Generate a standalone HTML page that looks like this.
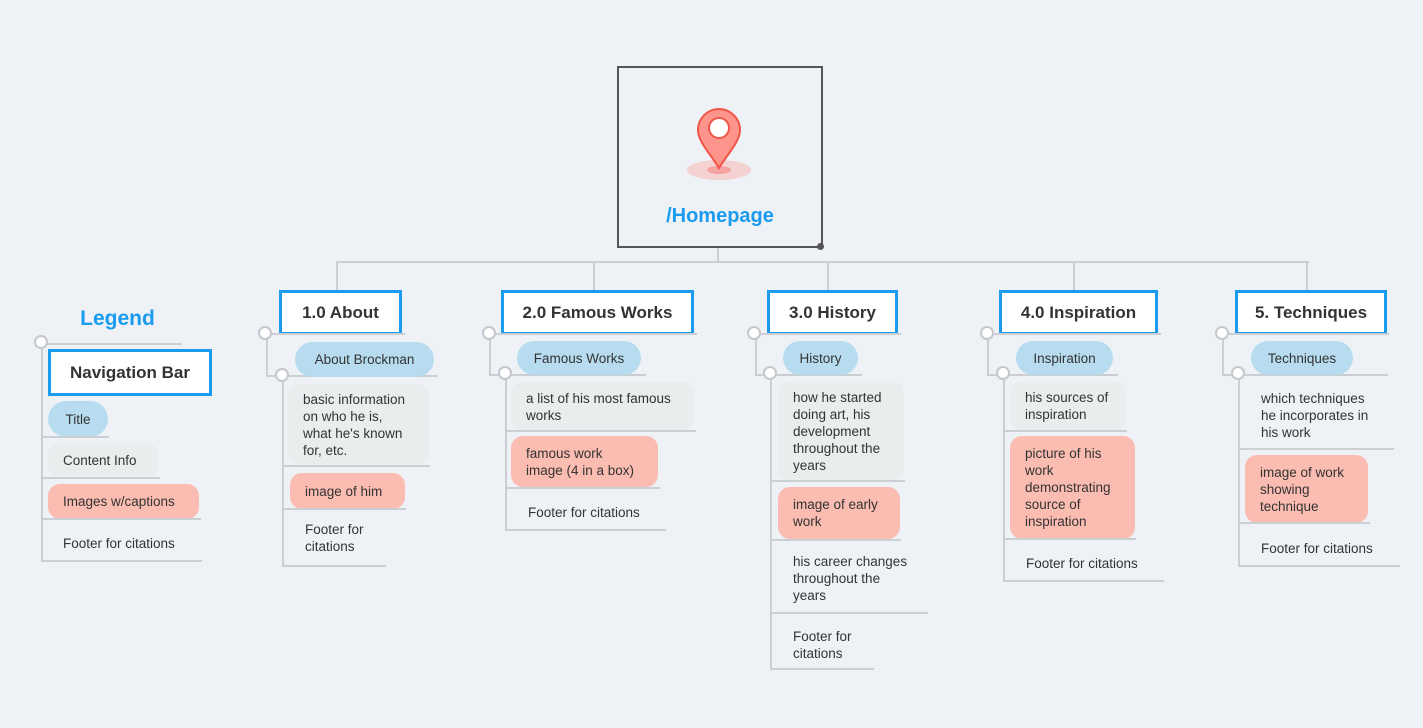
<!DOCTYPE html>
<html><head><meta charset="utf-8"><style>
body{margin:0;width:1423px;height:728px;background:#eef2f6;position:relative;overflow:hidden;font-family:"Liberation Sans",sans-serif;color:#333}
div{position:absolute;box-sizing:border-box}
.h{height:2px;background:#cbcfd3}
.v{width:2px;background:#cbcfd3}
.c{width:14px;height:14px;border-radius:50%;background:#fff;border:2px solid #c4c8cc}
.hd{background:#fff;border:3px solid #1a9bf0;font-weight:bold;font-size:17px;color:#333;text-align:center;display:flex;align-items:center;justify-content:center}
.n{font-size:13.5px;line-height:17px;padding-left:15px;display:flex;align-items:center;border-radius:12px}
.b{background:#b8dcef;border-radius:18px;justify-content:center;padding:0}
.g{background:#e8edee}
.p{background:#fbbcb1}
</style></head><body>
<!-- root -->
<div style="left:617px;top:66px;width:206px;height:182px;border:2px solid #555"></div>
<div style="left:817px;top:243px;width:7px;height:7px;border-radius:50%;background:#555"></div>
<svg style="position:absolute;left:686px;top:106px" width="68" height="78" viewBox="0 0 68 78">
<ellipse cx="33" cy="64" rx="32" ry="10" fill="#f6c9c9" opacity=".8"/>
<ellipse cx="33" cy="64" rx="12" ry="4" fill="#f4a3a0"/>
<path d="M33 62 C26 50 12 36 12 24 A21 21 0 0 1 54 24 C54 36 40 50 33 62Z" fill="#fd958c" stroke="#f05548" stroke-width="2"/>
<circle cx="33" cy="22" r="10" fill="#fff" stroke="#f05548" stroke-width="2"/>
</svg>
<div style="left:617px;top:205px;width:206px;text-align:center;font-size:20px;font-weight:bold;color:#1a9bf0">/Homepage</div>
<div class="v" style="left:717px;top:248px;height:15px"></div>
<div class="h" style="left:336px;top:261px;width:973px"></div>
<div class="v" style="left:336px;top:261px;height:30px"></div>
<div class="v" style="left:593px;top:261px;height:30px"></div>
<div class="v" style="left:827px;top:261px;height:30px"></div>
<div class="v" style="left:1073px;top:261px;height:30px"></div>
<div class="v" style="left:1306px;top:261px;height:30px"></div>

<!-- legend -->
<div style="left:60px;top:307px;width:115px;text-align:center;font-size:21px;font-weight:bold;color:#1a9bf0">Legend</div>
<div class="h" style="left:42px;top:343px;width:140px"></div>
<div class="v" style="left:41px;top:342px;height:220px"></div>
<div class="c" style="left:34px;top:335px"></div>
<div class="hd" style="left:48px;top:349px;width:164px;height:47px">Navigation Bar</div>
<div class="n b" style="left:48px;top:401px;width:60px;height:36px">Title</div>
<div class="h" style="left:42px;top:436px;width:67px"></div>
<div class="n g" style="left:48px;top:443px;width:110px;height:35px">Content Info</div>
<div class="h" style="left:42px;top:477px;width:118px"></div>
<div class="n p" style="left:48px;top:484px;width:151px;height:35px">Images w/captions</div>
<div class="h" style="left:42px;top:518px;width:159px"></div>
<div class="n" style="left:48px;top:526px;width:160px;height:35px">Footer for citations</div>
<div class="h" style="left:42px;top:560px;width:160px"></div>

<!-- About -->
<div class="hd" style="left:279px;top:290px;width:123px;height:45px">1.0 About</div>
<div class="h" style="left:267px;top:333px;width:138px"></div>
<div class="v" style="left:266px;top:333px;height:44px"></div>
<div class="h" style="left:266px;top:375px;width:172px"></div>
<div class="v" style="left:282px;top:375px;height:192px"></div>
<div class="c" style="left:258px;top:326px"></div>
<div class="c" style="left:275px;top:368px"></div>
<div class="n b" style="left:295px;top:342px;width:139px;height:35px">About Brockman</div>
<div class="n g" style="left:288px;top:384px;width:141px;height:82px">basic information<br>on who he is,<br>what he's known<br>for, etc.</div>
<div class="h" style="left:283px;top:465px;width:147px"></div>
<div class="n p" style="left:290px;top:473px;width:115px;height:36px">image of him</div>
<div class="h" style="left:283px;top:508px;width:123px"></div>
<div class="n" style="left:290px;top:518px;width:100px;height:40px">Footer for<br>citations</div>
<div class="h" style="left:283px;top:565px;width:103px"></div>

<!-- Famous -->
<div class="hd" style="left:501px;top:290px;width:193px;height:45px">2.0 Famous Works</div>
<div class="h" style="left:490px;top:333px;width:207px"></div>
<div class="v" style="left:489px;top:333px;height:42px"></div>
<div class="h" style="left:489px;top:374px;width:157px"></div>
<div class="v" style="left:505px;top:374px;height:157px"></div>
<div class="c" style="left:482px;top:326px"></div>
<div class="c" style="left:498px;top:366px"></div>
<div class="n b" style="left:517px;top:341px;width:124px;height:34px">Famous Works</div>
<div class="n g" style="left:511px;top:382px;width:183px;height:49px">a list of his most famous<br>works</div>
<div class="h" style="left:506px;top:430px;width:190px"></div>
<div class="n p" style="left:511px;top:436px;width:147px;height:51px">famous work<br>image (4 in a box)</div>
<div class="h" style="left:506px;top:487px;width:154px"></div>
<div class="n" style="left:513px;top:495px;width:160px;height:34px">Footer for citations</div>
<div class="h" style="left:506px;top:529px;width:160px"></div>

<!-- History -->
<div class="hd" style="left:767px;top:290px;width:131px;height:45px">3.0 History</div>
<div class="h" style="left:756px;top:333px;width:145px"></div>
<div class="v" style="left:755px;top:333px;height:42px"></div>
<div class="h" style="left:755px;top:374px;width:107px"></div>
<div class="v" style="left:770px;top:374px;height:296px"></div>
<div class="c" style="left:747px;top:326px"></div>
<div class="c" style="left:763px;top:366px"></div>
<div class="n b" style="left:783px;top:341px;width:75px;height:34px">History</div>
<div class="n g" style="left:778px;top:381px;width:126px;height:100px">how he started<br>doing art, his<br>development<br>throughout the<br>years</div>
<div class="h" style="left:771px;top:480px;width:134px"></div>
<div class="n p" style="left:778px;top:487px;width:122px;height:52px">image of early<br>work</div>
<div class="h" style="left:771px;top:539px;width:130px"></div>
<div class="n" style="left:778px;top:552px;width:150px;height:52px">his career changes<br>throughout the<br>years</div>
<div class="h" style="left:771px;top:612px;width:157px"></div>
<div class="n" style="left:778px;top:627px;width:100px;height:35px">Footer for<br>citations</div>
<div class="h" style="left:771px;top:668px;width:103px"></div>

<!-- Inspiration -->
<div class="hd" style="left:999px;top:290px;width:159px;height:45px">4.0 Inspiration</div>
<div class="h" style="left:988px;top:333px;width:173px"></div>
<div class="v" style="left:987px;top:333px;height:42px"></div>
<div class="h" style="left:987px;top:374px;width:131px"></div>
<div class="v" style="left:1003px;top:374px;height:208px"></div>
<div class="c" style="left:980px;top:326px"></div>
<div class="c" style="left:996px;top:366px"></div>
<div class="n b" style="left:1016px;top:341px;width:97px;height:34px">Inspiration</div>
<div class="n g" style="left:1010px;top:381px;width:116px;height:50px">his sources of<br>inspiration</div>
<div class="h" style="left:1004px;top:430px;width:123px"></div>
<div class="n p" style="left:1010px;top:436px;width:125px;height:103px">picture of his<br>work<br>demonstrating<br>source of<br>inspiration</div>
<div class="h" style="left:1004px;top:538px;width:132px"></div>
<div class="n" style="left:1011px;top:546px;width:155px;height:34px">Footer for citations</div>
<div class="h" style="left:1004px;top:580px;width:160px"></div>

<!-- Techniques -->
<div class="hd" style="left:1235px;top:290px;width:152px;height:45px">5. Techniques</div>
<div class="h" style="left:1223px;top:333px;width:166px"></div>
<div class="v" style="left:1222px;top:333px;height:42px"></div>
<div class="h" style="left:1222px;top:374px;width:166px"></div>
<div class="v" style="left:1238px;top:374px;height:193px"></div>
<div class="c" style="left:1215px;top:326px"></div>
<div class="c" style="left:1231px;top:366px"></div>
<div class="n b" style="left:1251px;top:341px;width:102px;height:34px">Techniques</div>
<div class="n" style="left:1246px;top:388px;width:140px;height:54px">which techniques<br>he incorporates in<br>his work</div>
<div class="h" style="left:1239px;top:448px;width:155px"></div>
<div class="n p" style="left:1245px;top:455px;width:123px;height:68px">image of work<br>showing<br>technique</div>
<div class="h" style="left:1239px;top:522px;width:131px"></div>
<div class="n" style="left:1246px;top:531px;width:155px;height:34px">Footer for citations</div>
<div class="h" style="left:1239px;top:565px;width:161px"></div>
</body></html>
